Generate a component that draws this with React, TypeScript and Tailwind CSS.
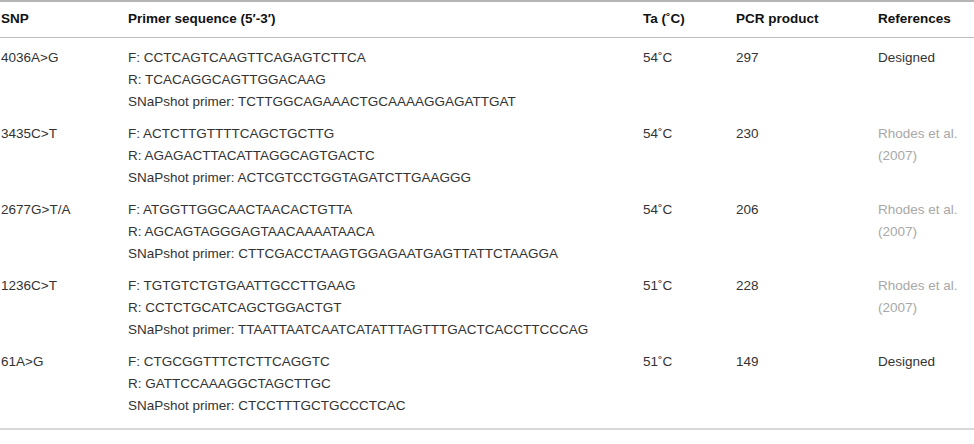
const rows = [
  {
    snp: "4036A>G",
    f: "CCTCAGTCAAGTTCAGAGTCTTCA",
    r: "TCACAGGCAGTTGGACAAG",
    s: "TCTTGGCAGAAACTGCAAAAGGAGATTGAT",
    ta: "54˚C",
    pcr: "297",
    ref: ["Designed"],
    cited: false,
  },
  {
    snp: "3435C>T",
    f: "ACTCTTGTTTTCAGCTGCTTG",
    r: "AGAGACTTACATTAGGCAGTGACTC",
    s: "ACTCGTCCTGGTAGATCTTGAAGGG",
    ta: "54˚C",
    pcr: "230",
    ref: ["Rhodes et al.", "(2007)"],
    cited: true,
  },
  {
    snp: "2677G>T/A",
    f: "ATGGTTGGCAACTAACACTGTTA",
    r: "AGCAGTAGGGAGTAACAAAATAACA",
    s: "CTTCGACCTAAGTGGAGAATGAGTTATTCTAAGGA",
    ta: "54˚C",
    pcr: "206",
    ref: ["Rhodes et al.", "(2007)"],
    cited: true,
  },
  {
    snp: "1236C>T",
    f: "TGTGTCTGTGAATTGCCTTGAAG",
    r: "CCTCTGCATCAGCTGGACTGT",
    s: "TTAATTAATCAATCATATTTAGTTTGACTCACCTTCCCAG",
    ta: "51˚C",
    pcr: "228",
    ref: ["Rhodes et al.", "(2007)"],
    cited: true,
  },
  {
    snp: "61A>G",
    f: "CTGCGGTTTCTCTTCAGGTC",
    r: "GATTCCAAAGGCTAGCTTGC",
    s: "CTCCTTTGCTGCCCTCAC",
    ta: "51˚C",
    pcr: "149",
    ref: ["Designed"],
    cited: false,
  },
];

const cols = "grid grid-cols-[128px_515px_93px_142px_96px]";

export default function App() {
  return (
    <div className="w-[974px] h-[444px] bg-white font-['Liberation_Sans',Arial,sans-serif] text-[13.5px] text-[#333]">
      <div className="border-t-2 border-[#b5b5b5]">
        <div className={`${cols} h-[36px] items-center border-b border-[#bdbdbd] font-bold text-[#111]`}>
          <div className="pl-px">SNP</div>
          <div>Primer sequence (5′-3′)</div>
          <div>Ta (˚C)</div>
          <div>PCR product</div>
          <div>References</div>
        </div>
        <div className="pt-[9px] border-b-2 border-[#d9d9d9]">
          {rows.map((row, i) => (
            <div
              key={row.snp}
              className={`${cols} leading-[22px] ${i === rows.length - 1 ? "pb-[11px]" : "pb-[10px]"}`}
            >
              <div className="pl-px">{row.snp}</div>
              <div>
                <div>F: {row.f}</div>
                <div>R: {row.r}</div>
                <div>SNaPshot primer: {row.s}</div>
              </div>
              <div>{row.ta}</div>
              <div>{row.pcr}</div>
              <div className={row.cited ? "text-[#a8a8a8]" : ""}>
                {row.ref.map((line) => (
                  <div key={line}>{line}</div>
                ))}
              </div>
            </div>
          ))}
        </div>
      </div>
    </div>
  );
}
